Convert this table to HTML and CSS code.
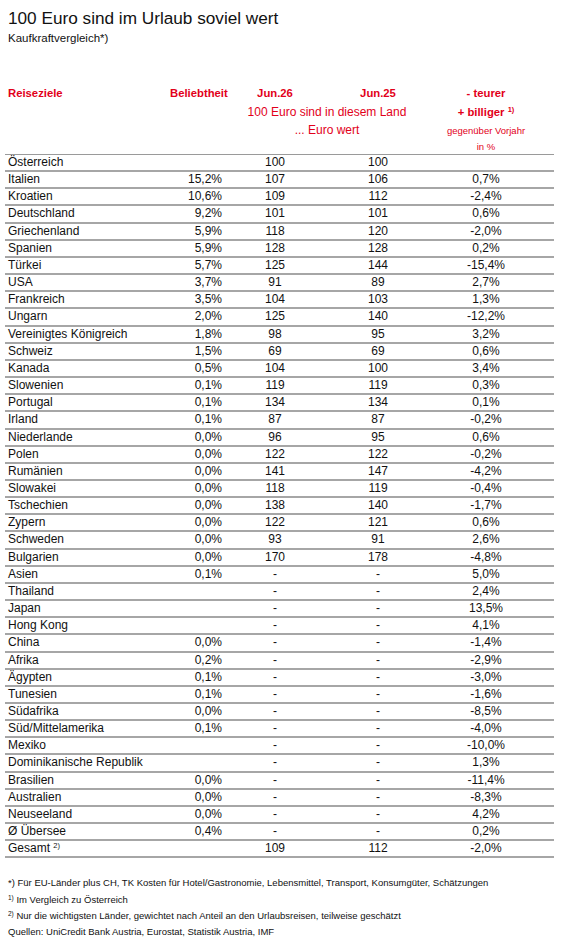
FILE: index.html
```html
<!DOCTYPE html>
<html lang="de">
<head>
    <meta charset="UTF-8">
    <meta name="viewport" content="width=device-width, initial-scale=1.0">
    <title>100 Euro sind im Urlaub soviel wert</title>
    <link rel="stylesheet" href="styles.css">
</head>
<body>
    <div class="page">
        <h1 class="title">100 Euro sind im Urlaub soviel wert</h1>
        <p class="subtitle">Kaufkraftvergleich*)</p>

        <table class="kk">
            <colgroup>
                <col class="c-land">
                <col class="c-bel">
                <col class="c-j26">
                <col class="c-j25">
                <col class="c-diff">
            </colgroup>
            <thead>
                <tr class="h1">
                    <th class="land">Reiseziele</th>
                    <th class="bel">Beliebtheit</th>
                    <th>Jun.26</th>
                    <th>Jun.25</th>
                    <th class="diff">- teurer</th>
                </tr>
                <tr class="h2">
                    <th></th>
                    <th></th>
                    <th class="light" colspan="2">100 Euro sind in diesem Land</th>
                    <th class="diff">+ billiger <sup class="fn">1)</sup></th>
                </tr>
                <tr class="h3">
                    <th></th>
                    <th></th>
                    <th class="light" colspan="2">... Euro wert</th>
                    <th class="diff small">gegenüber Vorjahr</th>
                </tr>
                <tr class="h4">
                    <th></th>
                    <th></th>
                    <th colspan="2"></th>
                    <th class="diff small">in %</th>
                </tr>
            </thead>
            <tbody>
                <tr><td>Österreich</td><td class="bel"></td><td>100</td><td>100</td><td class="diff"></td></tr>
                <tr><td>Italien</td><td class="bel">15,2%</td><td>107</td><td>106</td><td class="diff">0,7%</td></tr>
                <tr><td>Kroatien</td><td class="bel">10,6%</td><td>109</td><td>112</td><td class="diff">-2,4%</td></tr>
                <tr><td>Deutschland</td><td class="bel">9,2%</td><td>101</td><td>101</td><td class="diff">0,6%</td></tr>
                <tr><td>Griechenland</td><td class="bel">5,9%</td><td>118</td><td>120</td><td class="diff">-2,0%</td></tr>
                <tr><td>Spanien</td><td class="bel">5,9%</td><td>128</td><td>128</td><td class="diff">0,2%</td></tr>
                <tr><td>Türkei</td><td class="bel">5,7%</td><td>125</td><td>144</td><td class="diff">-15,4%</td></tr>
                <tr><td>USA</td><td class="bel">3,7%</td><td>91</td><td>89</td><td class="diff">2,7%</td></tr>
                <tr><td>Frankreich</td><td class="bel">3,5%</td><td>104</td><td>103</td><td class="diff">1,3%</td></tr>
                <tr><td>Ungarn</td><td class="bel">2,0%</td><td>125</td><td>140</td><td class="diff">-12,2%</td></tr>
                <tr><td>Vereinigtes Königreich</td><td class="bel">1,8%</td><td>98</td><td>95</td><td class="diff">3,2%</td></tr>
                <tr><td>Schweiz</td><td class="bel">1,5%</td><td>69</td><td>69</td><td class="diff">0,6%</td></tr>
                <tr><td>Kanada</td><td class="bel">0,5%</td><td>104</td><td>100</td><td class="diff">3,4%</td></tr>
                <tr><td>Slowenien</td><td class="bel">0,1%</td><td>119</td><td>119</td><td class="diff">0,3%</td></tr>
                <tr><td>Portugal</td><td class="bel">0,1%</td><td>134</td><td>134</td><td class="diff">0,1%</td></tr>
                <tr><td>Irland</td><td class="bel">0,1%</td><td>87</td><td>87</td><td class="diff">-0,2%</td></tr>
                <tr><td>Niederlande</td><td class="bel">0,0%</td><td>96</td><td>95</td><td class="diff">0,6%</td></tr>
                <tr><td>Polen</td><td class="bel">0,0%</td><td>122</td><td>122</td><td class="diff">-0,2%</td></tr>
                <tr><td>Rumänien</td><td class="bel">0,0%</td><td>141</td><td>147</td><td class="diff">-4,2%</td></tr>
                <tr><td>Slowakei</td><td class="bel">0,0%</td><td>118</td><td>119</td><td class="diff">-0,4%</td></tr>
                <tr><td>Tschechien</td><td class="bel">0,0%</td><td>138</td><td>140</td><td class="diff">-1,7%</td></tr>
                <tr><td>Zypern</td><td class="bel">0,0%</td><td>122</td><td>121</td><td class="diff">0,6%</td></tr>
                <tr><td>Schweden</td><td class="bel">0,0%</td><td>93</td><td>91</td><td class="diff">2,6%</td></tr>
                <tr><td>Bulgarien</td><td class="bel">0,0%</td><td>170</td><td>178</td><td class="diff">-4,8%</td></tr>
                <tr><td>Asien</td><td class="bel">0,1%</td><td>-</td><td>-</td><td class="diff">5,0%</td></tr>
                <tr><td>Thailand</td><td class="bel"></td><td>-</td><td>-</td><td class="diff">2,4%</td></tr>
                <tr><td>Japan</td><td class="bel"></td><td>-</td><td>-</td><td class="diff">13,5%</td></tr>
                <tr><td>Hong Kong</td><td class="bel"></td><td>-</td><td>-</td><td class="diff">4,1%</td></tr>
                <tr><td>China</td><td class="bel">0,0%</td><td>-</td><td>-</td><td class="diff">-1,4%</td></tr>
                <tr><td>Afrika</td><td class="bel">0,2%</td><td>-</td><td>-</td><td class="diff">-2,9%</td></tr>
                <tr><td>Ägypten</td><td class="bel">0,1%</td><td>-</td><td>-</td><td class="diff">-3,0%</td></tr>
                <tr><td>Tunesien</td><td class="bel">0,1%</td><td>-</td><td>-</td><td class="diff">-1,6%</td></tr>
                <tr><td>Südafrika</td><td class="bel">0,0%</td><td>-</td><td>-</td><td class="diff">-8,5%</td></tr>
                <tr><td>Süd/Mittelamerika</td><td class="bel">0,1%</td><td>-</td><td>-</td><td class="diff">-4,0%</td></tr>
                <tr><td>Mexiko</td><td class="bel"></td><td>-</td><td>-</td><td class="diff">-10,0%</td></tr>
                <tr><td>Dominikanische Republik</td><td class="bel"></td><td>-</td><td>-</td><td class="diff">1,3%</td></tr>
                <tr><td>Brasilien</td><td class="bel">0,0%</td><td>-</td><td>-</td><td class="diff">-11,4%</td></tr>
                <tr><td>Australien</td><td class="bel">0,0%</td><td>-</td><td>-</td><td class="diff">-8,3%</td></tr>
                <tr><td>Neuseeland</td><td class="bel">0,0%</td><td>-</td><td>-</td><td class="diff">4,2%</td></tr>
                <tr><td>Ø Übersee</td><td class="bel">0,4%</td><td>-</td><td>-</td><td class="diff">0,2%</td></tr>
                <tr><td>Gesamt <sup class="fn">2)</sup></td><td class="bel"></td><td>109</td><td>112</td><td class="diff">-2,0%</td></tr>
            </tbody>
        </table>

        <div class="notes">
            <p>*) Für EU-Länder plus CH, TK Kosten für Hotel/Gastronomie, Lebensmittel, Transport, Konsumgüter, Schätzungen</p>
            <p><sup class="fn">1)</sup> Im Vergleich zu Österreich</p>
            <p><sup class="fn">2)</sup> Nur die wichtigsten Länder, gewichtet nach Anteil an den Urlaubsreisen, teilweise geschätzt</p>
            <p>Quellen: UniCredit Bank Austria, Eurostat, Statistik Austria, IMF</p>
        </div>
    </div>
</body>
</html>
```

FILE: styles.css
```css
* {
    margin: 0;
    padding: 0;
    box-sizing: border-box;
}

body {
    font-family: "Liberation Sans", Arial, sans-serif;
    color: #111;
    background: #fff;
}

.page {
    padding: 0 7px 0 5px;
}

.title {
    margin: 7px 0 0 3px;
    font-size: 17.2px;
    font-weight: normal;
    line-height: 22px;
}

.subtitle {
    margin: 1px 0 0 3px;
    font-size: 11.5px;
    line-height: 16px;
}

/* Tabelle */
.kk {
    width: 549px;
    margin-top: 38px;
    table-layout: fixed;
    border-collapse: separate;
    border-spacing: 0;
}

.c-land { width: 165px; }
.c-bel  { width: 56px; }
.c-j26  { width: 98px; }
.c-j25  { width: 108px; }
.c-diff { width: 122px; }

.kk th {
    color: #e2001a;
    font-size: 11.3px;
    font-weight: bold;
    text-align: center;
    white-space: nowrap;
    padding: 0;
}

.kk .h1 th { line-height: 19px; }
.kk .h2 th { line-height: 19px; }
.kk .h3 th { line-height: 17px; }
.kk .h4 th {
    line-height: 15px;
    border-bottom: 1px solid #9a9a9a;
}

.kk th.land {
    text-align: left;
    padding-left: 3px;
}

.kk th.light {
    font-size: 12px;
    font-weight: normal;
    padding-right: 4px;
}

.kk th.small {
    font-size: 9.5px;
    font-weight: normal;
}

.kk td {
    font-size: 12px;
    line-height: 15.15px;
    text-align: center;
    white-space: nowrap;
    padding: 0;
    border-bottom: 2px solid #a6a6a6;
}

.kk td:first-child {
    text-align: left;
    padding-left: 3px;
}

.kk .bel {
    text-align: right;
    padding-right: 4px;
}

.kk .diff {
    padding-right: 14px;
}

.fn {
    font-size: 7.5px;
    line-height: 0;
    vertical-align: 4px;
}

/* Fussnoten */
.notes {
    margin-top: 17px;
    padding-left: 3px;
}

.notes p {
    font-size: 9.5px;
    line-height: 16.3px;
    white-space: nowrap;
}

.notes .fn {
    font-size: 6.5px;
    vertical-align: 3px;
}
```
